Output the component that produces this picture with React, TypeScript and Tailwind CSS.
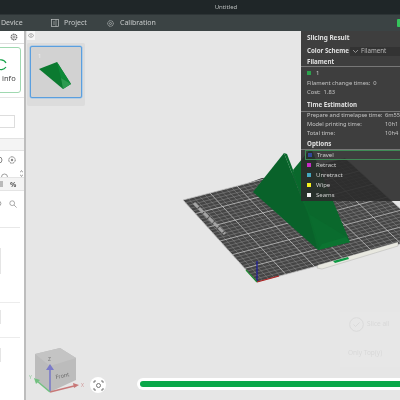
import React from "react";

const font = { fontFamily: '"Noto Sans", "Liberation Sans", sans-serif' };

// plate corners in page coordinates
const A = [257, 282];
const B = [183, 200];
const C = [345, 158];
const D = [430, 236];
function plate(u: number, v: number): [number, number] {
  // u along front edge A→D, v from front to back
  const x0 = A[0] + (D[0] - A[0]) * u, y0 = A[1] + (D[1] - A[1]) * u;
  const x1 = B[0] + (C[0] - B[0]) * u, y1 = B[1] + (C[1] - B[1]) * u;
  return [x0 + (x1 - x0) * v, y0 + (y1 - y0) * v];
}
const N = 30;
const lines: { a: [number, number]; b: [number, number]; major: boolean }[] = [];
for (let i = 0; i <= N; i++) {
  lines.push({ a: plate(i / N, 0), b: plate(i / N, 1), major: i % 5 === 0 });
  lines.push({ a: plate(0, i / N), b: plate(1, i / N), major: i % 5 === 0 });
}

function Scene() {
  return (
    <svg className="absolute inset-0" width="374" height="369" viewBox="26 31 374 369">
      <polygon points="240,186 262,178 300,176 300,180 262,186" fill="#333" />
      <polygon points={`${A} ${B} ${C} ${D}`} fill="#454545" />
      {lines.map((l, i) => (
        <line key={i} x1={l.a[0]} y1={l.a[1]} x2={l.b[0]} y2={l.b[1]} stroke={l.major ? "#c4c4c4" : "#8f8f8f"} strokeWidth={l.major ? 0.8 : 0.5} />
      ))}
      <line x1="194" y1="203" x2="225" y2="234" stroke="#a4a4a4" strokeWidth="3" strokeDasharray="6 1" />
      <polygon points="318,265 398,242 398,246 322,269 317,268" fill="#e8e8e0" stroke="#8a8a8a" strokeWidth="0.3" />
      <polygon points="333,261 348,257 349,259 335,263" fill="#0d9a45" />
      {/* model */}
      <polygon points="293,170 311,148 350,242 318,250" fill="#0a682c" />
      <polygon points="284,153 253,192 318,250 308,214" fill="#09622a" />
      <polygon points="284,153 287,154 323,248 318,250 308,214" fill="#0a6a2d" />
      <polygon points="309,214 345,236 350,242 320,249" fill="#0a6c2e" />
      <polygon points="318,250 350,242 346,237 322,244" fill="#0b7431" />
      {/* axes */}
      <line x1="257" y1="282" x2="257" y2="261" stroke="#1a1a9a" strokeWidth="1.2" />
      <line x1="257" y1="282" x2="279" y2="276" stroke="#b02020" strokeWidth="1.2" />
      <line x1="257" y1="282" x2="246" y2="270" stroke="#1f8a30" strokeWidth="1.2" />
      {/* view cube */}
      <polygon points="35,354 60,348 76,358 76,380 50,392 35,378" fill="#bcbcbc" />
      <polygon points="35,354 60,348 76,358 50,366" fill="#c4c4c4" />
      <line x1="50" y1="392" x2="50" y2="369" stroke="#7a7ac8" strokeWidth="1.6" />
      <polygon points="50,364 46,370 54,370" fill="#7a7ac8" />
      <line x1="50" y1="392" x2="74" y2="386" stroke="#c87878" strokeWidth="1.6" />
      <polygon points="79,385 73,383 74,388" fill="#c87878" />
      <line x1="50" y1="392" x2="37" y2="381" stroke="#72c080" strokeWidth="1.6" />
      <polygon points="34,378 36,384 40,380" fill="#72c080" />
      <text x="56" y="379" fontSize="5.5" fill="#666" transform="rotate(-12 56 379)" style={font}>Front</text>
      <text x="48" y="361" fontSize="5" fill="#777" style={font}>Z</text>
      <text x="29" y="379" fontSize="5" fill="#8fc89a" style={font}>Y</text>
      <text x="81" y="387" fontSize="5" fill="#d09a9a" style={font}>X</text>
    </svg>
  );
}

function Row({ label, value }: { label: string; value: string }) {
  return (
    <div className="flex h-[8.7px] items-center whitespace-nowrap pl-[6px] text-[5.7px] text-[#c4c4c4]">
      <span className="w-[78px]">{label}</span>
      <span>{value}</span>
    </div>
  );
}

function Swatch({ color, label, active }: { color: string; label: string; active?: boolean }) {
  return (
    <div className={`flex h-[10px] items-center gap-[5px] text-[#cfcfcf] ${active ? "ml-[4px] border-y border-l border-[#3f8a55] pl-[2px]" : "pl-[6px]"}`}>
      <span className="h-[4px] w-[4px]" style={{ backgroundColor: color }} />
      <span>{label}</span>
    </div>
  );
}

function Head({ children, className }: { children: string; className: string }) {
  return <div className={`border-b border-[#777] pl-[6px] text-[6.2px] font-bold leading-[8px] text-[#e0e0e0] ${className}`}>{children}</div>;
}

function SliceResult() {
  return (
    <div className="absolute right-0 top-0 h-[170px] w-[99px] bg-[#2b2b2b]/90 pt-[3px] text-[6px] leading-none" style={font}>
      <div className="pl-[6px] text-[6.4px] font-bold leading-[8px] text-[#e0e0e0]">Slicing Result</div>
      <div className="mt-[4px] flex h-[11px] items-center pl-[6px] text-[6.2px] font-bold text-[#e0e0e0]">
        <span className="w-[43px] whitespace-nowrap">Color Scheme</span>
        <div className="flex h-[9px] flex-1 items-center gap-[3px] bg-[#333] pl-[3px] font-normal text-[#bbb]">
          <svg width="5" height="3" viewBox="0 0 5 3"><path d="M0 0l2.5 2.5L5 0" stroke="#bbb" strokeWidth="0.7" fill="none" /></svg>
          Filament
        </div>
      </div>
      <Head className="mt-[1px] h-[9px]">Filament</Head>
      <div className="mt-[2px] flex h-[8px] items-center gap-[5px] pl-[6px] text-[#d0d0d0]">
        <span className="h-[4px] w-[4px] bg-[#2ba24c]" />1
      </div>
      <div className="mt-[1.5px] h-[9px] whitespace-nowrap pl-[6px] text-[5.8px] leading-[9px] text-[#c4c4c4]">
        Filament change times:&nbsp; 0
      </div>
      <div className="h-[9px] whitespace-nowrap pl-[6px] text-[5.8px] leading-[9px] text-[#c4c4c4]">Cost:&nbsp; 1.83</div>
      <Head className="mt-[4.5px] h-[11px]">Time Estimation</Head>
      <div>
        <Row label="Prepare and timelapse time:" value="6m55" />
        <Row label="Model printing time:" value="10h1" />
        <Row label="Total time:" value="10h4" />
      </div>
      <Head className="mt-[2px] h-[10px]">Options</Head>
      <Swatch color="#33489a" label="Travel" active />
      <Swatch color="#c62bc6" label="Retract" />
      <Swatch color="#45a8c0" label="Unretract" />
      <Swatch color="#f5f01e" label="Wipe" />
      <Swatch color="#f4f4f4" label="Seams" />
    </div>
  );
}

function Thumb() {
  return (
    <div className="absolute left-[1px] top-[12px] h-[63px] w-[58px] rounded-[2px] bg-[#dcdcdc] pl-[3px] pt-[3px]">
      <div className="relative h-[52px] w-[52px] rounded-[2px] border border-[#5a9fdf] bg-[#d2d2d2] shadow-[0_0_0_0.5px_#8fbde8]">
        <span className="absolute left-[7px] top-[6px] text-[6px] leading-none text-[#eee]" style={font}>1</span>
        <svg className="absolute inset-0" width="50" height="50" viewBox="0 0 50 50">
          <polygon points="8,22 26,15 40,37 32,42" fill="#0b7a30" />
          <polygon points="26,15 30,31 40,37" fill="#0d8a38" />
          <polygon points="30,31 40,37 32,42" fill="#2d9a50" />
        </svg>
      </div>
    </div>
  );
}

function Sidebar() {
  return (
    <aside className="w-[26px] shrink-0 overflow-hidden border-r-2 border-[#bdbdbd] bg-white" style={font}>
      <div className="flex h-[13px] items-center justify-end border-b border-[#dedede] pr-[6px]">
        <svg width="8" height="8" viewBox="0 0 8 8"><circle cx="4" cy="4" r="2.8" fill="none" stroke="#666" strokeWidth="1.2" strokeDasharray="1.4 0.5" /><circle cx="4" cy="4" r="1.1" fill="none" stroke="#666" strokeWidth="0.7" /></svg>
      </div>
      <div className="border-b border-[#e6e6e6] pb-[4px] pt-[3px]">
        <div className="ml-[-6px] flex h-[46px] w-[27px] flex-col rounded-[3px] border border-[#9fd8b0] pt-[10px]">
          <svg className="ml-[-1px]" width="14" height="13" viewBox="0 0 14 13"><path d="M2 4A6 6 0 0 1 12 5M12 9A6 6 0 0 1 3 10" fill="none" stroke="#16a34a" strokeWidth="1.2" /></svg>
          <span className="ml-[7px] mt-[4px] text-[7.5px] leading-none text-[#444]">info</span>
        </div>
      </div>
      <div className="mb-[10px] ml-[-3px] mt-[17px] h-[13px] w-[18px] border border-[#ddd] bg-white" />
      <div className="h-[13px] border-y border-[#e2e2e2] bg-[#f4f4f4]" />
      <div className="relative h-[26px]">
        <div className="flex items-start gap-[5px] pt-[5px]">
          <svg className="ml-[-5px]" width="8" height="8" viewBox="0 0 8 8"><circle cx="4" cy="4" r="3" fill="none" stroke="#888" strokeWidth="1" /></svg>
          <svg width="8" height="8" viewBox="0 0 8 8"><circle cx="4" cy="4" r="3.2" fill="none" stroke="#666" strokeWidth="1" strokeDasharray="1 0.5" /><circle cx="4" cy="4" r="1.2" fill="#888" /></svg>
        </div>
        <svg className="absolute bottom-0 left-[1px]" width="7" height="4" viewBox="0 0 7 4"><path d="M.5 4A3 3 0 0 1 6.5 4" fill="none" stroke="#777" strokeWidth="0.7" /></svg>
        <svg className="absolute bottom-0 right-[1px]" width="3" height="7" viewBox="0 0 3 7"><path d="M0 2.5L1.5 .5 3 2.5M0 4.5L1.5 6.5 3 4.5" fill="none" stroke="#777" strokeWidth="0.7" /></svg>
      </div>
      <div className="flex h-[14px] items-center gap-[7px] border-y border-[#e4e4e4] bg-[#f4f4f4]">
        <svg width="3" height="6" viewBox="0 0 3 6"><path d="M0 1h3M0 3h3M0 5h3" stroke="#666" strokeWidth="0.8" /></svg>
        <span className="text-[7px] font-bold leading-none text-[#555]">%</span>
      </div>
      <div className="flex h-[36px] items-start gap-[6px] pt-[9px]">
        <svg className="ml-[-4px]" width="6" height="7" viewBox="0 0 6 7"><circle cx="2.5" cy="3.5" r="2.4" fill="none" stroke="#999" strokeWidth="0.9" /></svg>
        <svg className="ml-[1px]" width="8" height="8" viewBox="0 0 8 8"><circle cx="3.2" cy="3.2" r="2.4" fill="none" stroke="#888" strokeWidth="0.7" /><path d="M5 5l2.6 2.6" stroke="#888" strokeWidth="0.7" /></svg>
      </div>
      <div className="h-[75px] w-[20px] border-t border-[#e8e8e8] pt-[20px]">
        <div className="h-[26px] w-[1px] bg-[#e5e5e5]" />
      </div>
      <div className="h-[35px] w-[20px] border-t border-[#ececec] pt-[7px]">
        <div className="h-[14px] w-[1px] bg-[#e5e5e5]" />
      </div>
      <div className="w-[20px] border-t border-[#ececec] pt-[10px]">
        <div className="h-[14px] w-[1px] bg-[#e5e5e5]" />
      </div>
    </aside>
  );
}

export default function App() {
  return (
    <div className="flex h-[400px] w-[400px] flex-col overflow-hidden bg-[#e6e6e6] blur-[0.4px]" style={font}>
      <div className="flex h-[15px] shrink-0 items-center justify-center border-b border-[#2d3436] bg-[#1f2628] pl-[52px] pt-[1px] text-[6px] text-[#b9bdbd]">
        Untitled
      </div>
      <div className="flex h-[16px] shrink-0 items-center bg-[#3b4344] text-[7px] text-[#c9cccc]">
        <span className="ml-[1px] w-[50px]">Device</span>
        <svg className="mr-[5px]" width="8" height="8" viewBox="0 0 8 8"><rect x="0.5" y="0.5" width="7" height="7" fill="none" stroke="#c0c4c4" strokeWidth="0.7" /><path d="M5 .5v7M2 3h2M2 5h2" stroke="#c0c4c4" strokeWidth="0.6" /></svg>
        <span className="w-[43px]">Project</span>
        <svg className="mr-[6px]" width="7" height="7" viewBox="0 0 7 7"><circle cx="3.5" cy="3.5" r="2.8" fill="none" stroke="#c0c4c4" strokeWidth="0.8" strokeDasharray="1.2 0.4" /><circle cx="3.5" cy="3.5" r="1" fill="none" stroke="#c0c4c4" strokeWidth="0.6" /></svg>
        <span>Calibration</span>
        <div className="ml-auto h-[8px] w-[3px] rounded-l-[1px] bg-[#35c45c]" />
      </div>
      <div className="flex min-h-0 flex-1">
        <Sidebar />
        <main className="relative flex-1">
          <Scene />
          <div className="absolute left-[1px] top-0 flex h-[9px] w-[8px] items-center justify-center bg-[#f6f6f6]">
            <svg width="6" height="5" viewBox="0 0 6 5"><path d="M2 .5L.5 2.5 2 4.5M4 .5l1.5 2L4 4.5M3 0v5" stroke="#777" strokeWidth="0.6" fill="none" /></svg>
          </div>
          <Thumb />
          <SliceResult />
          {/* capture button */}
          <div className="absolute left-[64px] top-[346px] flex h-[16px] w-[16px] items-center justify-center rounded-full bg-white">
            <svg width="11" height="11" viewBox="0 0 11 11"><circle cx="5.5" cy="5.5" r="2" fill="none" stroke="#555" strokeWidth="0.8" /><path d="M1 3V1h2M8 1h2v2M10 8v2H8M3 10H1V8" fill="none" stroke="#555" strokeWidth="0.8" /></svg>
          </div>
          {/* faint overlay */}
          <div className="absolute right-0 top-[281px] h-[55px] w-[60px] bg-[#e7e7e7] text-[6.5px] leading-none text-[#d8d8d8]">
            <div className="ml-[9px] mt-[5px] flex items-center gap-[3px]">
              <svg width="15" height="15" viewBox="0 0 15 15"><circle cx="7.5" cy="7.5" r="6.8" fill="none" stroke="#dadada" /><path d="M4.5 7.5l2 2 4-4" fill="none" stroke="#dadada" /></svg>
              Slice all
            </div>
            <div className="ml-[8px] mt-[18px]">Only Top(y)</div>
          </div>
          {/* progress */}
          <div className="absolute left-[111px] right-0 top-[347px] rounded-l-full bg-white py-[3px] pl-[3px]">
            <div className="h-[6px] rounded-l-full bg-[#0aa84a]" />
          </div>
        </main>
      </div>
    </div>
  );
}
